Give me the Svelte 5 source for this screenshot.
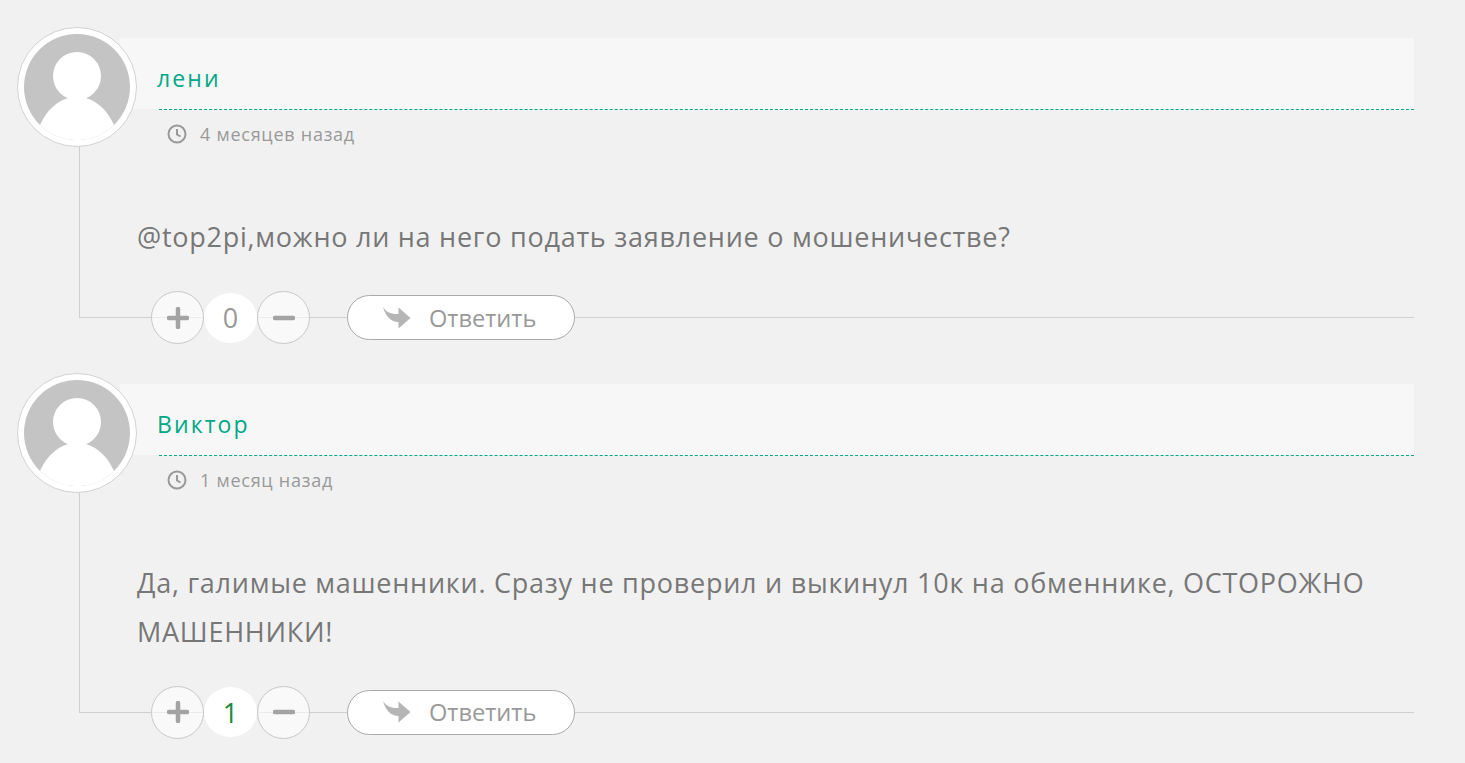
<script>
  const comments = [
    {
      author: 'лени',
      time: '4 месяцев назад',
      text: '@top2pi,можно ли на него подать заявление о мошеничестве?',
      votes: 0
    },
    {
      author: 'Виктор',
      time: '1 месяц назад',
      text: 'Да, галимые машенники. Сразу не проверил и выкинул 10к на обменнике, ОСТОРОЖНО МАШЕННИКИ!',
      votes: 1
    }
  ];
</script>

<div class="comments">
  {#each comments as c}
    <article class="comment">
      <div class="avatar">
        <svg viewBox="0 0 106 106" width="106" height="106">
          <circle cx="53" cy="53" r="53" fill="#c4c4c4" />
          <circle cx="53" cy="42" r="24" fill="#fff" />
          <path d="M16 91 C24 73 38 63 53 63 C68 63 82 73 90 91 A53 53 0 0 1 16 91 Z" fill="#fff" />
        </svg>
      </div>

      <header class="head">
        <span class="author">{c.author}</span>
      </header>
      <div class="time">
        <svg viewBox="0 0 20 20" width="20" height="20">
          <circle cx="10" cy="10" r="8.5" fill="none" stroke="#999" stroke-width="2" />
          <path d="M10 5V10.5L13.5 12.5" fill="none" stroke="#999" stroke-width="2" />
        </svg>
        <span>{c.time}</span>
      </div>

      <div class="body">
        <p class="text">{c.text}</p>
        <div class="actions">
          <div class="votes">
            <button class="vote" aria-label="plus">
              <svg viewBox="0 0 22 22" width="22" height="22"><path d="M11 2V20M2 11H20" stroke="#a3a3a3" stroke-width="4.5" stroke-linecap="round" /></svg>
            </button>
            <span class="count" class:positive={c.votes > 0}>{c.votes}</span>
            <button class="vote" aria-label="minus">
              <svg viewBox="0 0 22 22" width="22" height="22"><path d="M2 11H20" stroke="#a3a3a3" stroke-width="4.5" stroke-linecap="round" /></svg>
            </button>
          </div>
          <button class="reply">
            <svg viewBox="0 0 28 22" width="28" height="22"><path d="M0 0 C3 5 8 7.5 15.5 7 L15.5 0.5 L27.5 11 L15.5 21.5 L15.5 15 C8 15 2.5 9 0 0 Z" fill="#b5b5b5" /></svg>
            <span>Ответить</span>
          </button>
        </div>
      </div>
    </article>
  {/each}
</div>

<style>
  :global(body) {
    background: #f1f1f1;
    font-family: "Open Sans", "Noto Sans", sans-serif;
  }

  .comments {
    padding: 27px 51px 0 17px;
  }

  .comment {
    position: relative;
    padding-top: 11px;
    margin-bottom: 55px;
  }

  .avatar {
    position: absolute;
    top: 0;
    left: 0;
    width: 120px;
    height: 120px;
    box-sizing: border-box;
    padding: 6px;
    border: 1px solid #d2d2d2;
    border-radius: 50%;
    background: #fff;
    z-index: 2;
  }

  .avatar svg {
    display: block;
  }

  .head {
    margin-left: 103px;
    height: 63px;
    padding: 8px 0 0 37px;
    display: flex;
    align-items: center;
    background: #f7f7f7;
  }

  .author {
    font-size: 23px;
    letter-spacing: 2.1px;
    color: #00a887;
  }

  .time {
    margin-left: 142px;
    border-top: 1px dashed #00a887;
    padding: 12px 0 0 8px;
    height: 36px;
    display: flex;
    align-items: flex-start;
    gap: 13px;
    font-size: 18px;
    letter-spacing: 0.75px;
    line-height: 24px;
    color: #999;
  }

  .time svg {
    margin-top: 2px;
  }

  .body {
    margin-left: 62px;
    margin-top: -13px;
    border-left: 1px solid #cfcfcf;
    border-bottom: 1px solid #cfcfcf;
    padding: 68px 0 0 57px;
  }

  .text {
    margin: 0 0 29.6px;
    font-size: 27px;
    letter-spacing: 0.74px;
    line-height: 48.4px;
    color: #777;
  }

  .actions {
    display: flex;
    align-items: center;
    gap: 37px;
    margin: 0 0 -26.6px 14px;
  }

  .votes {
    display: flex;
    align-items: center;
  }

  .vote {
    width: 53px;
    height: 53px;
    padding: 0;
    border: 1px solid #c8c8c8;
    border-radius: 50%;
    background: rgba(255, 255, 255, 0.6);
    display: flex;
    align-items: center;
    justify-content: center;
  }

  .count {
    width: 53px;
    height: 50px;
    border-radius: 50%;
    background: #fff;
    display: flex;
    align-items: center;
    justify-content: center;
    font-size: 27px;
    color: #999;
  }

  .count.positive {
    color: #1a8a3c;
  }

  .reply {
    width: 228px;
    height: 45px;
    padding: 0 0 0 35px;
    border: 1px solid #aaa;
    border-radius: 23px;
    background: #fff;
    display: flex;
    align-items: center;
    gap: 18px;
    font-family: inherit;
    font-size: 23.6px;
    color: #999;
  }
</style>
